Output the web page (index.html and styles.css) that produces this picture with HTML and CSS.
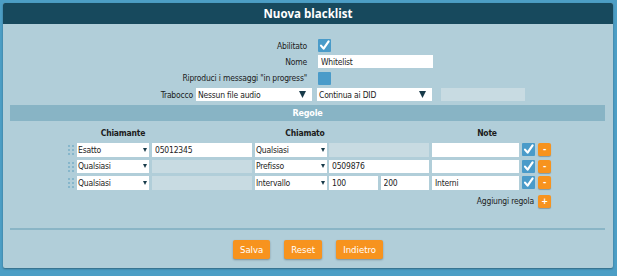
FILE: index.html
```html
<!doctype html>
<html>
<head>
<meta charset="utf-8">
<title>Nuova blacklist</title>
<link rel="stylesheet" href="styles.css">
</head>
<body>
<div class="panel">
	<div class="head">Nuova blacklist</div>

	<div class="form">
		<div class="frow">
			<label>Abilitato</label>
			<span class="chk"><svg viewBox="0 0 13 13" width="13" height="13"><path d="M3 6.6 L5.6 9.6 L10.6 2.4" /></svg></span>
		</div>
		<div class="frow">
			<label>Nome</label>
			<input type="text" class="txt name" value="Whitelist" />
		</div>
		<div class="frow">
			<label>Riproduci i messaggi "in progress"</label>
			<span class="chk off"></span>
		</div>
		<div class="trow">
			<label>Trabocco</label>
			<div class="sel big s1"><span>Nessun file audio</span><svg viewBox="0 0 7 7" width="7" height="7"><polygon points="0,0 7,0 3.5,7" /></svg></div>
			<div class="sel big s2"><span>Continua ai DID</span><svg viewBox="0 0 7 7" width="7" height="7"><polygon points="0,0 7,0 3.5,7" /></svg></div>
			<span class="txt dis s3"></span>
		</div>
	</div>

	<div class="bar">Regole</div>

	<div class="cols">
		<span class="c1">Chiamante</span>
		<span class="c2">Chiamato</span>
		<span class="c3">Note</span>
	</div>

	<div class="rules">
		<div class="rule">
			<i class="grip"></i>
			<div class="sel"><span>Esatto</span><svg viewBox="0 0 4 4" width="4" height="4"><polygon points="0,0 4,0 2,4" /></svg></div>
			<input type="text" class="txt w100" value="05012345" />
			<div class="sel"><span>Qualsiasi</span><svg viewBox="0 0 4 4" width="4" height="4"><polygon points="0,0 4,0 2,4" /></svg></div>
			<span class="txt dis w100 g2"></span>
			<input type="text" class="txt note" value="" />
			<span class="chk"><svg viewBox="0 0 13 13" width="13" height="13"><path d="M3 6.6 L5.6 9.6 L10.6 2.4" /></svg></span>
			<button class="mini">-</button>
		</div>
		<div class="rule">
			<i class="grip"></i>
			<div class="sel"><span>Qualsiasi</span><svg viewBox="0 0 4 4" width="4" height="4"><polygon points="0,0 4,0 2,4" /></svg></div>
			<span class="txt dis w100"></span>
			<div class="sel"><span>Prefisso</span><svg viewBox="0 0 4 4" width="4" height="4"><polygon points="0,0 4,0 2,4" /></svg></div>
			<input type="text" class="txt w100 g2" value="0509876" />
			<input type="text" class="txt note" value="" />
			<span class="chk"><svg viewBox="0 0 13 13" width="13" height="13"><path d="M3 6.6 L5.6 9.6 L10.6 2.4" /></svg></span>
			<button class="mini">-</button>
		</div>
		<div class="rule">
			<i class="grip"></i>
			<div class="sel"><span>Qualsiasi</span><svg viewBox="0 0 4 4" width="4" height="4"><polygon points="0,0 4,0 2,4" /></svg></div>
			<span class="txt dis w100"></span>
			<div class="sel"><span>Intervallo</span><svg viewBox="0 0 4 4" width="4" height="4"><polygon points="0,0 4,0 2,4" /></svg></div>
			<div class="pair g2">
				<input type="text" class="txt" value="100" />
				<input type="text" class="txt" value="200" />
			</div>
			<input type="text" class="txt note" value="Interni" />
			<span class="chk"><svg viewBox="0 0 13 13" width="13" height="13"><path d="M3 6.6 L5.6 9.6 L10.6 2.4" /></svg></span>
			<button class="mini">-</button>
		</div>
		<div class="add">
			<span>Aggiungi regola</span>
			<button class="mini">+</button>
		</div>
	</div>

	<div class="sep"></div>

	<div class="btns">
		<button class="btn">Salva</button>
		<button class="btn">Reset</button>
		<button class="btn">Indietro</button>
	</div>
</div>
</body>
</html>
```

FILE: styles.css
```css
	body,div,input,button,label,span{ margin: 0; padding: 0; box-sizing: border-box;}
	body{ background: #4c9ec5; padding: 3px; font-family: "DejaVu Sans Condensed", "Roboto", sans-serif; font-size: 8.5px; letter-spacing: -0.2px; color: #1c1c1c;}
	input,button{ font-family: inherit; font-size: 8.5px; letter-spacing: -0.2px; outline: none; border: none;}

	.panel{ width: 610px; height: 265px; background: #b1ced9; border-radius: 2px; box-shadow: 0 1px 2px rgba(0,0,0,.35); overflow: hidden;}
	.head{ height: 21px; line-height: 21px; background: #17495d; color: #fff; font-weight: bold; font-size: 11.5px; letter-spacing: 0; text-align: center; font-family: "Open Sans", sans-serif;}

	.form{ padding-top: 15px; display: flex; flex-direction: column; gap: 3.4px;}
	.frow{ display: grid; grid-template-columns: 304px auto; column-gap: 11px; height: 13px; align-items: center;}
	.frow label{ text-align: right; white-space: nowrap;}
	.chk{ display: block; width: 13px; height: 13px; background: #4a9bc9; border-radius: 1px;}
	.chk svg{ display: block;}
	.chk path{ fill: none; stroke: #fff; stroke-width: 2.2; stroke-linecap: round; stroke-linejoin: round;}

	.txt{ display: block; height: 13px; background: #fff; padding: 0 3px; color: #1c1c1c;}
	.txt.dis{ background: #c8dbe2;}
	.name{ width: 115px;}

	.trow{ display: flex; align-items: center; height: 13px; padding-left: 150px;}
	.trow label{ width: 40px; margin-right: 3px; white-space: nowrap; text-align: right;}
	.sel{ display: flex; align-items: center; justify-content: space-between; height: 13px; background: #fff; padding: 0 2px 0 1px; width: 72px;}
	.sel polygon{ fill: #183b4a;}
	.sel.big{ padding: 0 6px 0 2px;}
	.s1{ width: 116px; margin-right: 5px;}
	.s2{ width: 115px; margin-right: 9px;}
	.s3{ width: 84px;}

	.bar{ margin: 4px 8px 0 7px; height: 16px; line-height: 16px; background: #88b4c5; color: #fff; font-weight: bold; font-size: 9px; text-align: center;}

	.cols{ display: flex; margin-top: 6px; height: 12px; line-height: 12px; font-weight: bold;}
	.cols span{ text-align: center;}
	.c1{ width: 240px;}
	.c2{ width: 124px;}
	.c3{ width: 240px;}

	.rules{ margin-top: 4px; padding-left: 64px; width: 548px; display: flex; flex-direction: column; gap: 3px;}
	.rule{ display: flex; align-items: center; height: 13.5px;}
	.rule .txt,.rule .sel{ height: 13.5px;}
	.grip{ display: block; width: 8px; height: 11px; margin-right: 2px; background: radial-gradient(circle, #86b6cb 0.9px, transparent 1.1px) 0 0/4px 4px;}
	.rule .sel{ margin-right: 3px;}
	.w100{ width: 100px; margin-right: 3px;}
	.g2{ margin-left: -1px;}
	.pair{ display: flex; gap: 3px; width: 100px; margin-right: 3px;}
	.pair .txt{ flex: 1; width: 0; height: 13.5px;}
	.note{ width: 87px; margin-right: 3px;}
	.rule .chk{ margin-right: 3px;}
	.mini{ display: block; width: 13px; height: 13px; background: #f7931e; color: #fff; font-weight: bold; font-size: 9px; line-height: 13px; text-align: center; border-radius: 2px; box-shadow: 0 1px 1px rgba(0,0,0,.25);}

	.add{ display: flex; justify-content: flex-end; align-items: center; gap: 4px; margin-top: 2px; height: 13px;}

	.sep{ margin: 20px 8px 0 7px; height: 2px; background: #8ab5c6;}

	.btns{ display: flex; justify-content: center; gap: 14px; margin-top: 10px;}
	.btn{ height: 19px; padding: 0 7px; background: #f7931e; color: #fff; font-size: 9.5px; letter-spacing: 0; border-radius: 2px; box-shadow: 0 1px 2px rgba(0,0,0,.3); font-family: "DejaVu Sans Condensed", "Open Sans", sans-serif;}
```
